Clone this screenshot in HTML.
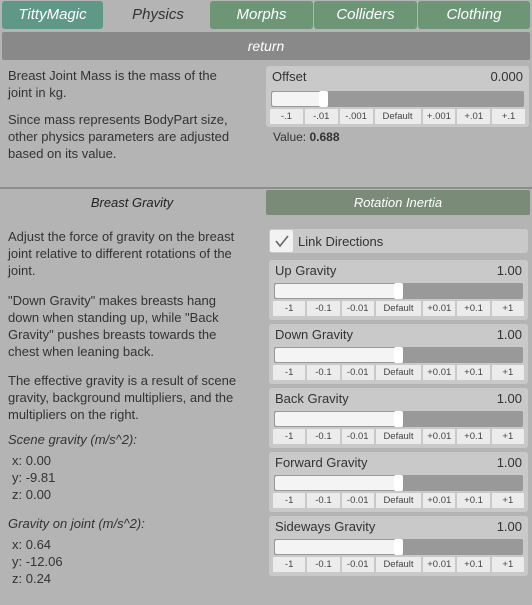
<!DOCTYPE html><html><head><style>
*{margin:0;padding:0;box-sizing:border-box}
body{width:532px;height:605px;background:#b4b4b4;font-family:"Liberation Sans",sans-serif;position:relative;overflow:hidden;color:#333}
.a{position:absolute}
.tab{position:absolute;top:1px;height:28px;color:#fff;font-style:italic;font-size:15px;text-align:center;line-height:28px;border-radius:3px}
.t{position:absolute;left:8px;font-size:13px;line-height:17px;color:#333;white-space:nowrap}
.box{position:absolute;left:269px;width:259px;height:60px;background:#c9c9c9;border-radius:3px}
.lab{position:absolute;left:6px;top:3px;font-size:13px;color:#333}
.val{position:absolute;right:6px;top:3px;font-size:13px;color:#333}
.sl{position:absolute;left:5px;right:5px;top:23px;height:16px;background:#999;border-radius:2px}
.fill{position:absolute;left:1px;top:1px;bottom:1px;background:#f4f4f4;border-radius:2px}
.knob{position:absolute;top:0;width:9px;height:16px;background:#fff;border-radius:2px}
.bt{position:absolute;left:4px;right:4px;top:41px;height:15px;display:flex;gap:2px}
.bt span{flex:1;background:#ececec;font-size:9.5px;color:#444;text-align:center;line-height:15px;border-radius:1px}
.bt span.d{flex:1.4}
</style></head><body>
<div class="tab" style="left:2px;width:101px;background:#5f9886">TittyMagic</div>
<div class="tab" style="left:106px;width:104px;color:#333">Physics</div>
<div class="tab" style="left:210px;width:103px;background:#6c9676">Morphs</div>
<div class="tab" style="left:314px;width:103px;background:#6c9676">Colliders</div>
<div class="tab" style="left:418px;width:112px;background:#6c9676">Clothing</div>
<div class="a" style="left:2px;top:32px;width:528px;height:28px;background:#898989;color:#fff;font-style:italic;font-size:14px;text-align:center;line-height:28px;border-radius:2px">return</div>

<div class="t" style="top:67px">Breast Joint Mass is the mass of the<br>joint in kg.</div>
<div class="t" style="top:111px">Since mass represents BodyPart size,<br>other physics parameters are adjusted<br>based on its value.</div>

<div class="box" style="left:266px;top:66px;width:263px;height:61px">
<div class="lab">Offset</div><div class="val">0.000</div>
<div class="sl" style="top:25px"><div class="fill" style="width:50px"></div><div class="knob" style="left:48px"></div></div>
<div class="bt" style="top:43px"><span>-.1</span><span>-.01</span><span>-.001</span><span class="d">Default</span><span>+.001</span><span>+.01</span><span>+.1</span></div>
</div>
<div class="a" style="left:273px;top:130px;font-size:12px;color:#333">Value: <b>0.688</b></div>

<div class="a" style="left:0;top:187px;width:532px;height:2px;background:#8d8d8d"></div>
<div class="a" style="left:0;top:190px;width:264px;height:25px;font-style:italic;font-size:13px;text-align:center;line-height:25px;color:#222">Breast Gravity</div>
<div class="a" style="left:266px;top:190px;width:264px;height:25px;background:#7a8b78;color:#fff;font-style:italic;font-size:13px;text-align:center;line-height:25px;border-radius:2px">Rotation Inertia</div>

<div class="t" style="top:228px">Adjust the force of gravity on the breast<br>joint relative to different rotations of the<br>joint.</div>
<div class="t" style="top:292px">"Down Gravity" makes breasts hang<br>down when standing up, while "Back<br>Gravity" pushes breasts towards the<br>chest when leaning back.</div>
<div class="t" style="top:372px">The effective gravity is a result of scene<br>gravity, background multipliers, and the<br>multipliers on the right.</div>
<div class="t" style="top:431px;font-style:italic">Scene gravity (m/s^2):</div>
<div class="t" style="top:452px;left:12px">x: 0.00<br>y: -9.81<br>z: 0.00</div>
<div class="t" style="top:515px;font-style:italic">Gravity on joint (m/s^2):</div>
<div class="t" style="top:536px;left:12px">x: 0.64<br>y: -12.06<br>z: 0.24</div>

<div class="a" style="left:269px;top:229px;width:259px;height:24px;background:#c9c9c9;border-radius:3px">
<div class="a" style="left:1px;top:1px;width:23px;height:22px;background:#f2f2f2;border-radius:2px"><svg width="23" height="22"><path d="M6 11 L10 16 L18 6" stroke="#666" stroke-width="1.6" fill="none"/></svg></div>
<div class="a" style="left:29px;top:5px;font-size:13px">Link Directions</div>
</div>

<div class="box" style="top:260px"><div class="lab">Up Gravity</div><div class="val">1.00</div><div class="sl"><div class="fill" style="width:124px"></div><div class="knob" style="left:120px"></div></div><div class="bt"><span>-1</span><span>-0.1</span><span>-0.01</span><span class="d">Default</span><span>+0.01</span><span>+0.1</span><span>+1</span></div></div>
<div class="box" style="top:324px"><div class="lab">Down Gravity</div><div class="val">1.00</div><div class="sl"><div class="fill" style="width:124px"></div><div class="knob" style="left:120px"></div></div><div class="bt"><span>-1</span><span>-0.1</span><span>-0.01</span><span class="d">Default</span><span>+0.01</span><span>+0.1</span><span>+1</span></div></div>
<div class="box" style="top:388px"><div class="lab">Back Gravity</div><div class="val">1.00</div><div class="sl"><div class="fill" style="width:124px"></div><div class="knob" style="left:120px"></div></div><div class="bt"><span>-1</span><span>-0.1</span><span>-0.01</span><span class="d">Default</span><span>+0.01</span><span>+0.1</span><span>+1</span></div></div>
<div class="box" style="top:452px"><div class="lab">Forward Gravity</div><div class="val">1.00</div><div class="sl"><div class="fill" style="width:124px"></div><div class="knob" style="left:120px"></div></div><div class="bt"><span>-1</span><span>-0.1</span><span>-0.01</span><span class="d">Default</span><span>+0.01</span><span>+0.1</span><span>+1</span></div></div>
<div class="box" style="top:516px"><div class="lab">Sideways Gravity</div><div class="val">1.00</div><div class="sl"><div class="fill" style="width:124px"></div><div class="knob" style="left:120px"></div></div><div class="bt"><span>-1</span><span>-0.1</span><span>-0.01</span><span class="d">Default</span><span>+0.01</span><span>+0.1</span><span>+1</span></div></div>
</body></html>
